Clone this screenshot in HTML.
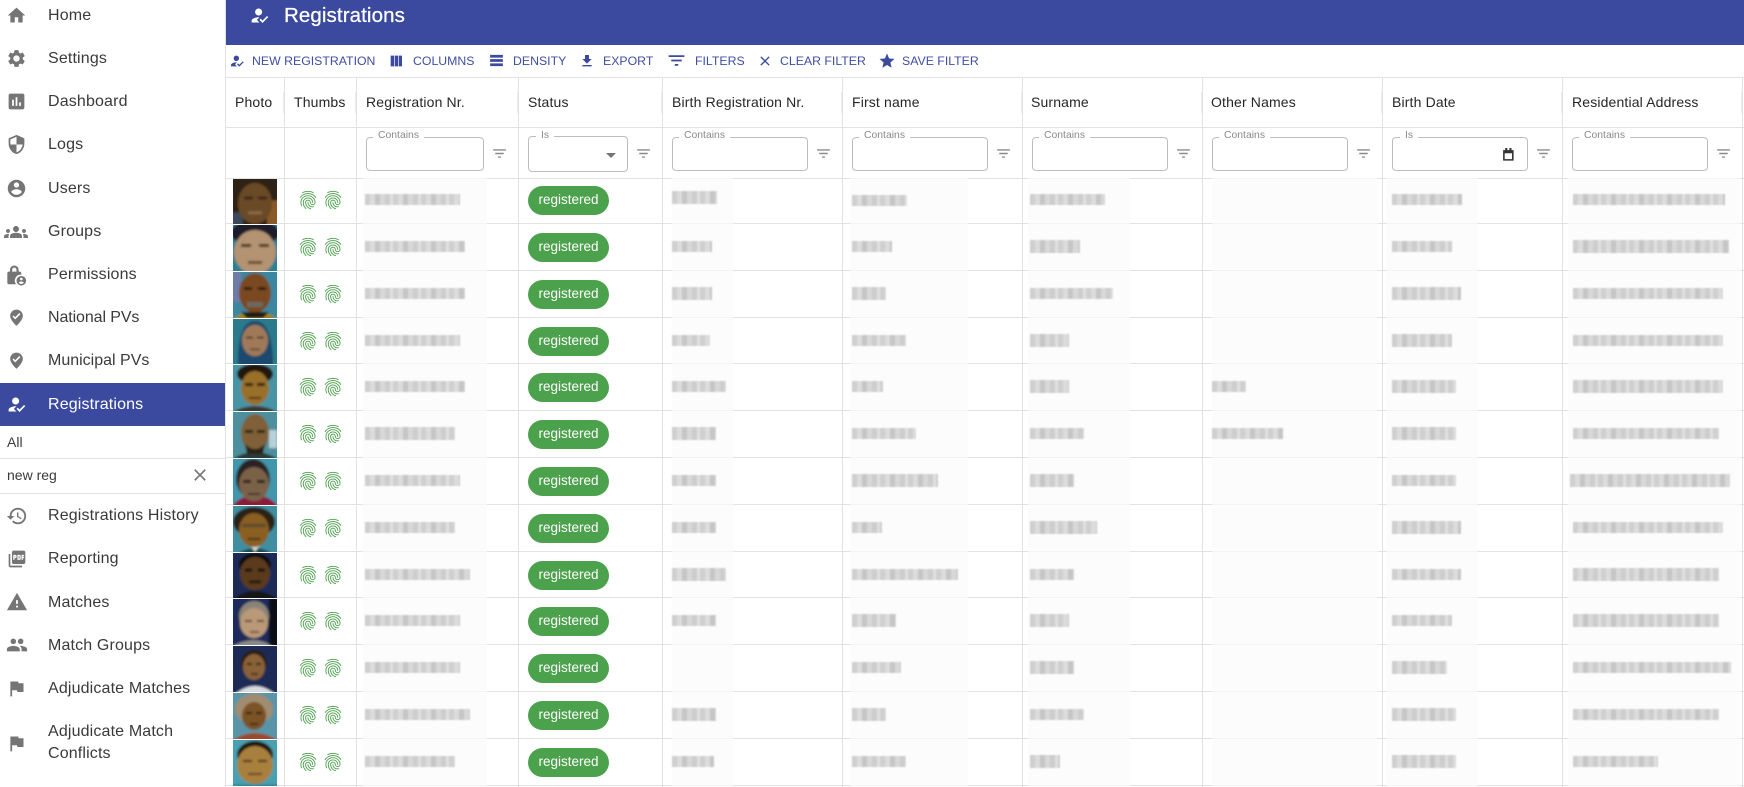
<!DOCTYPE html>
<html><head><meta charset="utf-8"><title>Registrations</title>
<style>
html,body{margin:0;padding:0;background:#fff}
body{width:1744px;height:787px;overflow:hidden;position:relative;font-family:"Liberation Sans",sans-serif}
div,svg,span{position:absolute}
.t{left:48px;font-size:16px;letter-spacing:.15px;color:#3a3a3a;line-height:20px;white-space:nowrap}
.ic{left:6px;width:21px;height:21px;fill:#757575}
.tb{top:53px;font-size:12.3px;line-height:16px;color:#3f4ea3;white-space:nowrap}
.ti{width:16px;height:16px;fill:#3b4a9f}
.h{left:226px;width:1518px;height:1px;background:#e2e2e2}
.v{top:78px;bottom:0;width:1px;background:#e2e2e2}
.sep{top:92px;height:21px;width:1px;background:#ececec}
.th{top:93px;font-size:14px;letter-spacing:.15px;line-height:18px;color:#262626;white-space:nowrap}
.i{top:137px;width:134px;height:32px;border:1px solid #bdbdbd;border-radius:4px;background:#fff}
.l{top:129px;height:13px;background:#fff;font-size:10.4px;line-height:13px;color:#8a8a8a;padding:0 5px;white-space:nowrap}
.fi{top:145px;width:17px;height:17px;fill:#8a8a8a}
.halo{top:178px;bottom:0;background:rgba(251,251,251,.72)}
.r{left:0;width:1744px;height:47px}
.ph{left:233px;top:2px;width:44px;height:46px}
.f{top:13px;width:22px;height:22px;fill:#4b9f4b}
.c{left:528px;top:10px;width:81px;height:29px;border-radius:15px;background:#4ca24c;color:#fff;font-size:13.5px;line-height:27px;text-align:center}
.b{top:18px;height:11px;background-image:repeating-linear-gradient(90deg,#cfcfcf 0 5px,#dcdcdc 5px 10px,#c6c6c6 10px 15px,#d8d8d8 15px 20px,#cdcdcd 20px 25px,#e0e0e0 25px 28px);filter:blur(.9px)}
.e{top:17px;height:13px}
</style></head><body>
<svg width="0" height="0" style="position:absolute"><defs>
<filter id="bl"><feGaussianBlur stdDeviation="1"/></filter>
<symbol id="home" viewBox="0 0 24 24"><path d="M10 20v-6h4v6h5v-8h3L12 3 2 12h3v8z"/></symbol>
<symbol id="set" viewBox="0 0 24 24"><path d="M19.14 12.94c.04-.3.06-.61.06-.94 0-.32-.02-.64-.07-.94l2.03-1.58c.18-.14.23-.41.12-.61l-1.92-3.32c-.12-.22-.37-.29-.59-.22l-2.39.96c-.5-.38-1.03-.7-1.62-.94l-.36-2.54c-.04-.24-.24-.41-.48-.41h-3.84c-.24 0-.43.17-.47.41l-.36 2.54c-.59.24-1.13.57-1.62.94l-2.39-.96c-.22-.08-.47 0-.59.22L2.74 8.87c-.12.21-.08.47.12.61l2.03 1.58c-.05.3-.09.63-.09.94s.02.64.07.94l-2.03 1.58c-.18.14-.23.41-.12.61l1.92 3.32c.12.22.37.29.59.22l2.39-.96c.5.38 1.03.7 1.62.94l.36 2.54c.05.24.24.41.48.41h3.84c.24 0 .44-.17.47-.41l.36-2.54c.59-.24 1.13-.56 1.62-.94l2.39.96c.22.08.47 0 .59-.22l1.92-3.32c.12-.22.07-.47-.12-.61l-2.01-1.58zM12 15.6c-1.98 0-3.6-1.62-3.6-3.6s1.62-3.6 3.6-3.6 3.6 1.62 3.6 3.6-1.62 3.6-3.6 3.6z"/></symbol>
<symbol id="dash" viewBox="0 0 24 24"><path d="M19 3H5c-1.1 0-2 .9-2 2v14c0 1.1.9 2 2 2h14c1.1 0 2-.9 2-2V5c0-1.1-.9-2-2-2zM9 17H7v-7h2v7zm4 0h-2V7h2v10zm4 0h-2v-4h2v4z"/></symbol>
<symbol id="sec" viewBox="0 0 24 24"><path d="M12 1L3 5v6c0 5.55 3.84 10.74 9 12 5.16-1.26 9-6.45 9-12V5l-9-4zm0 10.99h7c-.53 4.12-3.28 7.79-7 8.94V12H5V6.3l7-3.11v8.8z"/></symbol>
<symbol id="usr" viewBox="0 0 24 24"><path d="M12 2C6.48 2 2 6.48 2 12s4.48 10 10 10 10-4.48 10-10S17.52 2 12 2zm0 3c1.66 0 3 1.34 3 3s-1.34 3-3 3-3-1.34-3-3 1.34-3 3-3zm0 14.2c-2.5 0-4.71-1.28-6-3.22.03-1.99 4-3.08 6-3.08 1.99 0 5.97 1.09 6 3.08-1.29 1.94-3.5 3.22-6 3.22z"/></symbol>
<symbol id="grp" viewBox="0 0 24 24"><path d="M12 12.75c1.63 0 3.07.39 4.24.9 1.08.48 1.76 1.56 1.76 2.73V18H6v-1.61c0-1.18.68-2.26 1.76-2.73 1.17-.52 2.61-.91 4.24-.91zM4 13c1.1 0 2-.9 2-2s-.9-2-2-2-2 .9-2 2 .9 2 2 2zm1.13 1.1c-.37-.06-.74-.1-1.13-.1-.99 0-1.93.21-2.78.58C.48 14.9 0 15.62 0 16.43V18h4.5v-1.61c0-.83.23-1.61.63-2.29zM20 13c1.1 0 2-.9 2-2s-.9-2-2-2-2 .9-2 2 .9 2 2 2zm4 3.43c0-.81-.48-1.53-1.22-1.85-.85-.37-1.79-.58-2.78-.58-.39 0-.76.04-1.13.1.4.68.63 1.46.63 2.29V18H24v-1.57zM12 6c1.66 0 3 1.34 3 3s-1.34 3-3 3-3-1.34-3-3 1.34-3 3-3z"/></symbol>
<symbol id="perm" viewBox="0 0 24 24"><path d="M15.500 7.500h-1V5.500a5 5 0 0 0-10 0v2h-1a2 2 0 0 0-2 2V20a2 2 0 0 0 2 2h8A6.800 6.800 0 0 1 17.500 11.100V9.500a2 2 0 0 0-2-2zM7 5.500a2.500 2.500 0 0 1 5 0v2H7z"/><path fill-rule="evenodd" d="M17.500 12.500a5.500 5.500 0 1 0 0 11 5.500 5.500 0 0 0 0-11zm0 2a1.500 1.500 0 1 1 0 3 1.500 1.500 0 0 1 0-3zm0 7.200c-1.200 0-2.300-.6-2.900-1.500.3-.8 1.900-1.300 2.900-1.300s2.600.5 2.900 1.300c-.6.9-1.700 1.500-2.900 1.500z"/></symbol>
<symbol id="pv" viewBox="0 0 24 24"><path d="M12 2C7.600 2 4 5.400 4 9.800c0 5.700 8 12.700 8 12.700s8-7 8-12.700C20 5.400 16.400 2 12 2zm-1.600 12.300L7 10.900l1.400-1.400 2 2 5.200-5.200L17 7.700z"/></symbol>
<symbol id="reg" viewBox="0 0 24 24"><path d="M9 17l3-2.940c-.39-.04-.68-.06-1-.06-2.670 0-8 1.340-8 4v2h9l-3-3zm2-5c2.210 0 4-1.790 4-4s-1.790-4-4-4-4 1.790-4 4 1.790 4 4 4z"/><path d="M15.470 20.500L12 17l1.400-1.410 2.070 2.080 5.130-5.170 1.400 1.410z"/></symbol>
<symbol id="hist" viewBox="0 0 24 24"><path d="M13 3c-4.970 0-9 4.030-9 9H1l3.890 3.890.07.14L9 12H6c0-3.870 3.130-7 7-7s7 3.130 7 7-3.130 7-7 7c-1.930 0-3.680-.79-4.940-2.060l-1.420 1.420C8.270 19.990 10.510 21 13 21c4.970 0 9-4.030 9-9s-4.030-9-9-9zm-1 5v5l4.280 2.540.72-1.210-3.500-2.080V8H12z"/></symbol>
<symbol id="pdf" viewBox="0 0 24 24"><path d="M20 2H8c-1.100 0-2 .9-2 2v12c0 1.100.9 2 2 2h12c1.100 0 2-.9 2-2V4c0-1.100-.9-2-2-2zm-8.500 7.500c0 .83-.67 1.500-1.500 1.500H9v2H7.500V7H10c.83 0 1.500.67 1.500 1.500v1zm5 2c0 .83-.67 1.500-1.500 1.500h-2.500V7H15c.83 0 1.500.67 1.500 1.500v3zm4-3H19v1h1.500V11H19v2h-1.500V7h3v1.500zM9 9.500h1v-1H9v1zM4 6H2v14c0 1.100.9 2 2 2h14v-2H4V6zm10 5.500h1v-3h-1v3z"/></symbol>
<symbol id="warn" viewBox="0 0 24 24"><path d="M1 21h22L12 2 1 21zm12-3h-2v-2h2v2zm0-4h-2v-4h2v4z"/></symbol>
<symbol id="ppl" viewBox="0 0 24 24"><path d="M16 11c1.660 0 2.990-1.340 2.990-3S17.660 5 16 5c-1.660 0-3 1.340-3 3s1.340 3 3 3zm-8 0c1.660 0 2.990-1.340 2.990-3S9.660 5 8 5C6.340 5 5 6.340 5 8s1.340 3 3 3zm0 2c-2.330 0-7 1.170-7 3.500V19h14v-2.500c0-2.330-4.670-3.500-7-3.500zm8 0c-.29 0-.62.02-.97.05 1.160.84 1.970 1.970 1.970 3.450V19h6v-2.500c0-2.330-4.670-3.500-7-3.500z"/></symbol>
<symbol id="flag" viewBox="0 0 24 24"><path d="M14.400 6L14 4H5v17h2v-7h5.600l.4 2h7V6z"/></symbol>
<symbol id="x" viewBox="0 0 24 24"><path d="M19 6.410L17.590 5 12 10.590 6.410 5 5 6.410 10.590 12 5 17.590 6.410 19 12 13.410 17.590 19 19 17.590 13.410 12z"/></symbol>
<symbol id="col" viewBox="0 0 24 24"><path d="M10 20h5V4h-5v16zm-6 0h5V4H4v16zM16 4v16h5V4h-5z"/></symbol>
<symbol id="den" viewBox="0 0 24 24"><path d="M3 4h18v4H3zM3 10h18v4H3zM3 16h18v4H3z"/></symbol>
<symbol id="dl" viewBox="0 0 24 24"><path d="M19 9h-4V3H9v6H5l7 7 7-7zM5 18v2h14v-2H5z"/></symbol>
<symbol id="fl" viewBox="0 0 24 24"><path d="M10 18h4v-2h-4v2zM3 6v2h18V6H3zm3 7h12v-2H6v2z"/></symbol>
<symbol id="star" viewBox="0 0 24 24"><path d="M12 17.270L18.180 21l-1.640-7.030L22 9.240l-7.190-.61L12 2 9.190 8.630 2 9.240l5.460 4.730L5.820 21z"/></symbol>
<symbol id="fp" viewBox="0 0 24 24"><path d="M17.810 4.470c-.08 0-.16-.02-.23-.06C15.660 3.420 14 3 12.010 3c-1.980 0-3.860.47-5.570 1.410-.24.13-.54.04-.68-.2-.13-.24-.04-.55.2-.68C7.820 2.520 9.860 2 12.010 2c2.130 0 3.990.47 6.030 1.520.25.13.34.43.21.67-.09.18-.26.28-.44.28zM3.500 9.720c-.1 0-.2-.03-.29-.09-.23-.16-.28-.47-.12-.7.99-1.400 2.250-2.500 3.750-3.270C9.980 4.040 14 4.030 17.150 5.650c1.500.77 2.760 1.860 3.750 3.250.16.22.11.54-.12.7-.23.16-.54.11-.7-.12-.9-1.260-2.040-2.250-3.390-2.940-2.870-1.470-6.540-1.470-9.400.01-1.360.7-2.500 1.700-3.400 2.960-.08.14-.23.21-.39.21zm6.250 12.070c-.13 0-.26-.05-.35-.15-.87-.87-1.340-1.430-2.010-2.640-.69-1.230-1.050-2.730-1.050-4.340 0-2.970 2.540-5.390 5.660-5.390s5.660 2.420 5.660 5.390c0 .28-.22.5-.5.5s-.5-.22-.5-.5c0-2.420-2.090-4.390-4.660-4.390-2.570 0-4.660 1.970-4.660 4.390 0 1.440.32 2.770.93 3.850.64 1.150 1.080 1.640 1.850 2.420.19.2.19.51 0 .71-.11.1-.24.15-.37.15zm7.170-1.850c-1.190 0-2.240-.3-3.100-.89-1.490-1.010-2.380-2.650-2.380-4.390 0-.28.22-.5.5-.5s.5.22.5.5c0 1.410.72 2.740 1.940 3.560.71.48 1.540.71 2.540.71.24 0 .64-.03 1.040-.1.27-.05.53.13.58.41.05.27-.13.53-.41.58-.57.11-1.070.12-1.210.12zM14.910 22c-.04 0-.09-.01-.13-.02-1.590-.44-2.630-1.030-3.720-2.100-1.400-1.390-2.170-3.240-2.170-5.220 0-1.620 1.380-2.940 3.080-2.940 1.700 0 3.080 1.320 3.080 2.940 0 1.070.93 1.940 2.080 1.940s2.080-.87 2.080-1.940c0-3.770-3.250-6.830-7.250-6.830-2.840 0-5.440 1.580-6.610 4.030-.39.81-.59 1.760-.59 2.800 0 .78.07 2.010.67 3.610.1.26-.03.55-.29.64-.26.1-.55-.04-.64-.29-.49-1.310-.73-2.610-.73-3.960 0-1.200.23-2.290.68-3.240 1.330-2.790 4.280-4.600 7.510-4.600 4.550 0 8.250 3.510 8.250 7.830 0 1.620-1.380 2.940-3.080 2.940s-3.080-1.320-3.080-2.940c0-1.070-.93-1.940-2.080-1.940s-2.080.87-2.080 1.940c0 1.710.66 3.310 1.870 4.510.95.94 1.860 1.460 3.270 1.850.27.07.42.35.35.61-.05.23-.26.38-.47.38z"/></symbol>
</defs></svg>

<!-- sidebar -->
<div style="left:225px;top:0;width:1px;height:787px;background:#e2e2e2"></div>
<div style="left:0;top:383px;width:225px;height:43px;background:#3b4a9f"></div>
<svg class="ic" style="top:5px"><use href="#home"/></svg><div class="t" style="top:6px">Home</div>
<svg class="ic" style="top:48px"><use href="#set"/></svg><div class="t" style="top:49px">Settings</div>
<svg class="ic" style="top:91px"><use href="#dash"/></svg><div class="t" style="top:92px">Dashboard</div>
<svg class="ic" style="top:134px"><use href="#sec"/></svg><div class="t" style="top:135px">Logs</div>
<svg class="ic" style="top:178px"><use href="#usr"/></svg><div class="t" style="top:179px">Users</div>
<svg class="ic" style="left:4px;top:220px;width:24px;height:24px"><use href="#grp"/></svg><div class="t" style="top:222px">Groups</div>
<svg class="ic" style="top:265px"><use href="#perm"/></svg><div class="t" style="top:265px">Permissions</div>
<svg class="ic" style="left:7px;top:308px;width:19px;height:19px"><use href="#pv"/></svg><div class="t" style="top:308px;letter-spacing:-.1px">National PVs</div>
<svg class="ic" style="left:7px;top:351px;width:19px;height:19px"><use href="#pv"/></svg><div class="t" style="top:351px;letter-spacing:0">Municipal PVs</div>
<svg class="ic" style="top:394px;fill:#fff"><use href="#reg"/></svg><div class="t" style="top:395px;color:#fff">Registrations</div>
<div class="t" style="left:7px;top:432px;font-size:14px;letter-spacing:0">All</div>
<div style="left:0;top:458px;width:225px;height:1px;background:#e2e2e2"></div>
<div class="t" style="left:7px;top:465px;font-size:14px;letter-spacing:0">new reg</div>
<svg style="left:190px;top:465px;width:20px;height:20px;fill:#757575"><use href="#x"/></svg>
<div style="left:0;top:493px;width:225px;height:1px;background:#e2e2e2"></div>
<svg class="ic" style="top:505px;width:22px;height:22px"><use href="#hist"/></svg><div class="t" style="top:506px">Registrations History</div>
<svg class="ic" style="left:7px;top:549px;width:20px;height:20px"><use href="#pdf"/></svg><div class="t" style="top:549px">Reporting</div>
<svg class="ic" style="top:591px;width:22px;height:22px"><use href="#warn"/></svg><div class="t" style="top:593px">Matches</div>
<svg class="ic" style="top:634px;width:22px;height:22px"><use href="#ppl"/></svg><div class="t" style="top:636px">Match Groups</div>
<svg class="ic" style="top:678px"><use href="#flag"/></svg><div class="t" style="top:679px">Adjudicate Matches</div>
<svg class="ic" style="top:733px"><use href="#flag"/></svg><div class="t" style="top:722px">Adjudicate Match</div><div class="t" style="top:744px">Conflicts</div>

<!-- header -->
<div style="left:226px;top:0;width:1518px;height:45px;background:#3b4a9f"></div>
<svg style="left:249px;top:5px;width:21px;height:21px;fill:#fff"><use href="#reg"/></svg>
<div style="left:284px;top:4px;font-size:20.5px;letter-spacing:.1px;line-height:24px;color:#fff;white-space:nowrap;-webkit-text-stroke:.25px #fff">Registrations</div>

<!-- toolbar -->
<svg class="ti" style="left:229px;top:53px"><use href="#reg"/></svg><div class="tb" style="left:252px">NEW REGISTRATION</div>
<svg class="ti" style="left:388px;top:53px"><use href="#col"/></svg><div class="tb" style="left:413px">COLUMNS</div>
<svg class="ti" style="left:488px;top:52px;width:17px;height:17px"><use href="#den"/></svg><div class="tb" style="left:513px">DENSITY</div>
<svg class="ti" style="left:579px;top:53px"><use href="#dl"/></svg><div class="tb" style="left:603px">EXPORT</div>
<svg class="ti" style="left:666px;top:50px;width:21px;height:21px"><use href="#fl"/></svg><div class="tb" style="left:695px">FILTERS</div>
<svg class="ti" style="left:757px;top:53px"><use href="#x"/></svg><div class="tb" style="left:780px">CLEAR FILTER</div>
<svg class="ti" style="left:878px;top:52px;width:18px;height:18px"><use href="#star"/></svg><div class="tb" style="left:902px">SAVE FILTER</div>

<!-- halos + grid -->
<div class="h" style="top:77px"></div><div class="h" style="top:127px"></div><div class="h" style="top:178px"></div>
<div class="h" style="top:223px"></div><div class="h" style="top:270px"></div><div class="h" style="top:317px"></div><div class="h" style="top:363px"></div><div class="h" style="top:410px"></div><div class="h" style="top:457px"></div><div class="h" style="top:504px"></div><div class="h" style="top:551px"></div><div class="h" style="top:597px"></div><div class="h" style="top:644px"></div><div class="h" style="top:691px"></div><div class="h" style="top:738px"></div><div class="h" style="top:785px"></div>
<div class="halo" style="left:363px;width:124px"></div><div class="halo" style="left:672px;width:61px"></div><div class="halo" style="left:850px;width:118px"></div><div class="halo" style="left:1028px;width:102px"></div><div class="halo" style="left:1212px;width:166px"></div><div class="halo" style="left:1386px;width:92px"></div><div class="halo" style="left:1568px;width:172px"></div>
<div class="v" style="left:284px"></div><div class="v" style="left:356px"></div><div class="v" style="left:518px"></div><div class="v" style="left:662px"></div><div class="v" style="left:842px"></div><div class="v" style="left:1022px"></div><div class="v" style="left:1202px"></div><div class="v" style="left:1382px"></div><div class="v" style="left:1562px"></div><div class="v" style="left:1742px"></div>
<div class="sep" style="left:283px"></div><div class="sep" style="left:355px"></div><div class="sep" style="left:517px"></div><div class="sep" style="left:661px"></div><div class="sep" style="left:841px"></div><div class="sep" style="left:1021px"></div><div class="sep" style="left:1201px"></div><div class="sep" style="left:1381px"></div><div class="sep" style="left:1561px"></div><div class="sep" style="left:1741px"></div>

<!-- table header -->
<div class="th" style="left:235px">Photo</div><div class="th" style="left:294px">Thumbs</div><div class="th" style="left:366px">Registration Nr.</div><div class="th" style="left:528px">Status</div><div class="th" style="left:672px">Birth Registration Nr.</div><div class="th" style="left:852px">First name</div><div class="th" style="left:1031px">Surname</div><div class="th" style="left:1211px">Other Names</div><div class="th" style="left:1392px">Birth Date</div><div class="th" style="left:1572px">Residential Address</div>

<!-- filters -->
<div class="i" style="left:366px;width:116px"></div><div class="l" style="left:373px">Contains</div><svg class="fi" style="left:491px"><use href="#fl"/></svg>
<div class="i" style="left:528px;width:98px;height:34px;top:136px"></div><div class="l" style="left:536px">Is</div><svg style="left:599px;top:143px;width:20px;height:20px;fill:#757575"><path d="M7 10l5 5 5-5z"/></svg><svg class="fi" style="left:635px"><use href="#fl"/></svg>
<div class="i" style="left:672px"></div><div class="l" style="left:679px">Contains</div><svg class="fi" style="left:815px"><use href="#fl"/></svg>
<div class="i" style="left:852px"></div><div class="l" style="left:859px">Contains</div><svg class="fi" style="left:995px"><use href="#fl"/></svg>
<div class="i" style="left:1032px"></div><div class="l" style="left:1039px">Contains</div><svg class="fi" style="left:1175px"><use href="#fl"/></svg>
<div class="i" style="left:1212px"></div><div class="l" style="left:1219px">Contains</div><svg class="fi" style="left:1355px"><use href="#fl"/></svg>
<div class="i" style="left:1392px"></div><div class="l" style="left:1400px">Is</div><svg style="left:1501px;top:147px;width:14px;height:14px;fill:#333"><path d="M2 3h2V1h2v2h2V1h2v2h2v10H2zM3.500 6v5.500h7V6z" transform="scale(1.050)"/></svg><svg class="fi" style="left:1535px"><use href="#fl"/></svg>
<div class="i" style="left:1572px"></div><div class="l" style="left:1579px">Contains</div><svg class="fi" style="left:1715px"><use href="#fl"/></svg>

<!-- row 1 -->
<div class="r" style="top:176px">
<svg class="ph" style="top:3px;height:45px" viewBox="0 0 44 46" preserveAspectRatio="none"><g filter="url(#bl)"><rect x="-2" y="-2" width="48" height="50" fill="#2e2418"/><rect x="34" y="22" width="12" height="26" fill="#8a5a28"/><rect x="-2" y="34" width="12" height="14" fill="#3a4a58"/><ellipse cx="22" cy="25" rx="17" ry="21" fill="#6b4a28"/><rect x="11" y="18" width="9" height="3" fill="#3a2814"/><rect x="25" y="18" width="9" height="3" fill="#3a2814"/><rect x="15" y="33" width="14" height="3" fill="#8a6a48"/></g></svg>
<svg class="f" style="left:297px"><use href="#fp"/></svg><svg class="f" style="left:322px"><use href="#fp"/></svg>
<div class="c">registered</div>
<div class="b" style="left:365px;width:95px"></div><div class="b e" style="left:672px;width:45px;top:15px"></div><div class="b" style="left:852px;width:55px;top:19px"></div><div class="b" style="left:1030px;width:75px"></div><div class="b" style="left:1392px;width:70px"></div><div class="b" style="left:1573px;width:152px"></div></div>
<!-- row 2 -->
<div class="r" style="top:223px">
<svg class="ph" viewBox="0 0 44 46" preserveAspectRatio="none"><g filter="url(#bl)"><rect x="-2" y="-2" width="48" height="50" fill="#2a7f94"/><ellipse cx="22" cy="8" rx="24" ry="13" fill="#1d1f2a"/><ellipse cx="22" cy="27" rx="21" ry="22" fill="#b39372"/><rect x="8" y="19" width="10" height="3" fill="#4a3420"/><rect x="26" y="19" width="10" height="3" fill="#4a3420"/><rect x="15" y="36" width="14" height="3" fill="#6a4a30"/></g></svg>
<svg class="f" style="left:297px"><use href="#fp"/></svg><svg class="f" style="left:322px"><use href="#fp"/></svg>
<div class="c">registered</div>
<div class="b" style="left:365px;width:100px"></div><div class="b" style="left:672px;width:40px"></div><div class="b" style="left:852px;width:40px"></div><div class="b e" style="left:1030px;width:50px"></div><div class="b" style="left:1392px;width:60px"></div><div class="b e" style="left:1573px;width:156px"></div></div>
<!-- row 3 -->
<div class="r" style="top:270px">
<svg class="ph" viewBox="0 0 44 46" preserveAspectRatio="none"><g filter="url(#bl)"><rect x="-2" y="-2" width="48" height="50" fill="#3a87a0"/><rect x="-2" y="-2" width="10" height="32" fill="#6f7ca8"/><path d="M-2 48 Q22 30 46 48z" fill="#a08020"/><ellipse cx="22" cy="21" rx="16" ry="20" fill="#7a4a22"/><rect x="11" y="15" width="8" height="3" fill="#2a1a10"/><rect x="25" y="15" width="8" height="3" fill="#2a1a10"/><rect x="14" y="30" width="16" height="5" fill="#6a6a60"/><path d="M8 40 L36 40 L30 46 L14 46z" fill="#1a1a18"/></g></svg>
<svg class="f" style="left:297px"><use href="#fp"/></svg><svg class="f" style="left:322px"><use href="#fp"/></svg>
<div class="c">registered</div>
<div class="b" style="left:365px;width:100px"></div><div class="b e" style="left:672px;width:40px"></div><div class="b e" style="left:852px;width:34px"></div><div class="b" style="left:1030px;width:83px"></div><div class="b e" style="left:1392px;width:69px"></div><div class="b" style="left:1573px;width:150px"></div></div>
<!-- row 4 -->
<div class="r" style="top:317px">
<svg class="ph" style="height:45px" viewBox="0 0 44 46" preserveAspectRatio="none"><g filter="url(#bl)"><rect x="-2" y="-2" width="48" height="50" fill="#2a7a8c"/><path d="M5 48 Q4 2 22 2 Q40 2 40 48z" fill="#1d4a6e"/><ellipse cx="22" cy="22" rx="13" ry="16" fill="#a07a58"/><rect x="13" y="18" width="7" height="2" fill="#4a3828"/><rect x="24" y="18" width="7" height="2" fill="#4a3828"/><rect x="17" y="30" width="10" height="2" fill="#6a4a38"/></g></svg>
<svg class="f" style="left:297px"><use href="#fp"/></svg><svg class="f" style="left:322px"><use href="#fp"/></svg>
<div class="c">registered</div>
<div class="b" style="left:365px;width:95px"></div><div class="b" style="left:672px;width:38px"></div><div class="b" style="left:852px;width:54px"></div><div class="b e" style="left:1030px;width:39px"></div><div class="b e" style="left:1392px;width:60px"></div><div class="b" style="left:1573px;width:150px"></div></div>
<!-- row 5 -->
<div class="r" style="top:363px">
<svg class="ph" viewBox="0 0 44 46" preserveAspectRatio="none"><g filter="url(#bl)"><rect x="-2" y="-2" width="48" height="50" fill="#4a94a4"/><ellipse cx="22" cy="9" rx="18" ry="10" fill="#201810"/><path d="M-2 48 Q22 34 46 48z" fill="#3a3430"/><ellipse cx="22" cy="23" rx="14" ry="17" fill="#98702a"/><rect x="12" y="18" width="8" height="3" fill="#2a1a10"/><rect x="24" y="18" width="8" height="3" fill="#2a1a10"/><rect x="16" y="32" width="12" height="2" fill="#5a2a18"/></g></svg>
<svg class="f" style="left:297px"><use href="#fp"/></svg><svg class="f" style="left:322px"><use href="#fp"/></svg>
<div class="c">registered</div>
<div class="b" style="left:365px;width:100px"></div><div class="b" style="left:672px;width:54px"></div><div class="b" style="left:852px;width:31px"></div><div class="b e" style="left:1030px;width:39px"></div><div class="b" style="left:1212px;width:34px"></div><div class="b e" style="left:1392px;width:64px"></div><div class="b e" style="left:1573px;width:150px"></div></div>
<!-- row 6 -->
<div class="r" style="top:410px">
<svg class="ph" viewBox="0 0 44 46" preserveAspectRatio="none"><g filter="url(#bl)"><rect x="-2" y="-2" width="48" height="50" fill="#4d8f9c"/><rect x="36" y="18" width="8" height="18" fill="#b8d0d8"/><path d="M-2 48 Q22 32 46 48z" fill="#2c3a3c"/><ellipse cx="22" cy="21" rx="14" ry="19" fill="#7f6038"/><rect x="12" y="18" width="8" height="3" fill="#2a2010"/><rect x="24" y="18" width="8" height="3" fill="#2a2010"/><path d="M12 32 Q22 42 32 32 L30 42 L14 42z" fill="#2a2018"/></g></svg>
<svg class="f" style="left:297px"><use href="#fp"/></svg><svg class="f" style="left:322px"><use href="#fp"/></svg>
<div class="c">registered</div>
<div class="b e" style="left:365px;width:90px"></div><div class="b e" style="left:672px;width:44px"></div><div class="b" style="left:852px;width:64px"></div><div class="b" style="left:1030px;width:54px"></div><div class="b" style="left:1212px;width:71px"></div><div class="b e" style="left:1392px;width:64px"></div><div class="b" style="left:1573px;width:146px"></div></div>
<!-- row 7 -->
<div class="r" style="top:457px">
<svg class="ph" viewBox="0 0 44 46" preserveAspectRatio="none"><g filter="url(#bl)"><rect x="-2" y="-2" width="48" height="50" fill="#3f96ac"/><ellipse cx="20" cy="20" rx="17" ry="20" fill="#2a2020"/><path d="M-2 48 Q10 34 22 38 Q34 34 46 48z" fill="#8a1f3a"/><ellipse cx="21" cy="25" rx="15" ry="17" fill="#7a6248"/><rect x="10" y="21" width="8" height="3" fill="#2a2018"/><rect x="24" y="21" width="8" height="3" fill="#2a2018"/><rect x="15" y="34" width="12" height="2" fill="#4a3028"/></g></svg>
<svg class="f" style="left:297px"><use href="#fp"/></svg><svg class="f" style="left:322px"><use href="#fp"/></svg>
<div class="c">registered</div>
<div class="b" style="left:365px;width:95px"></div><div class="b" style="left:672px;width:44px"></div><div class="b e" style="left:852px;width:86px"></div><div class="b e" style="left:1030px;width:44px"></div><div class="b" style="left:1392px;width:64px"></div><div class="b e" style="left:1570px;width:160px"></div></div>
<!-- row 8 -->
<div class="r" style="top:504px">
<svg class="ph" viewBox="0 0 44 46" preserveAspectRatio="none"><g filter="url(#bl)"><rect x="-2" y="-2" width="48" height="50" fill="#3f8fa0"/><ellipse cx="21" cy="16" rx="21" ry="15" fill="#2a2018"/><path d="M4 48 Q22 36 40 48z" fill="#1e4a50"/><path d="M16 38 L22 46 L28 38z" fill="#d8d8d0"/><ellipse cx="21" cy="24" rx="15" ry="17" fill="#8a5e22"/><rect x="9" y="18" width="24" height="3" fill="#5a4a30"/><rect x="15" y="32" width="12" height="2" fill="#4a2a18"/></g></svg>
<svg class="f" style="left:297px"><use href="#fp"/></svg><svg class="f" style="left:322px"><use href="#fp"/></svg>
<div class="c">registered</div>
<div class="b" style="left:365px;width:90px"></div><div class="b" style="left:672px;width:44px"></div><div class="b" style="left:852px;width:30px"></div><div class="b e" style="left:1030px;width:67px"></div><div class="b e" style="left:1392px;width:69px"></div><div class="b" style="left:1573px;width:150px"></div></div>
<!-- row 9 -->
<div class="r" style="top:551px;height:46px">
<svg class="ph" style="height:45px" viewBox="0 0 44 46" preserveAspectRatio="none"><g filter="url(#bl)"><rect x="-2" y="-2" width="48" height="50" fill="#1e2c58"/><ellipse cx="22" cy="12" rx="16" ry="12" fill="#0e0c10"/><path d="M-2 48 Q22 30 46 48z" fill="#141214"/><ellipse cx="22" cy="21" rx="15" ry="17" fill="#5a3a1e"/><rect x="12" y="16" width="7" height="3" fill="#140c08"/><rect x="25" y="16" width="7" height="3" fill="#140c08"/><rect x="16" y="28" width="12" height="3" fill="#2a1810"/></g></svg>
<svg class="f" style="left:297px"><use href="#fp"/></svg><svg class="f" style="left:322px"><use href="#fp"/></svg>
<div class="c">registered</div>
<div class="b" style="left:365px;width:105px"></div><div class="b e" style="left:672px;width:54px"></div><div class="b" style="left:852px;width:106px"></div><div class="b" style="left:1030px;width:44px"></div><div class="b" style="left:1392px;width:69px"></div><div class="b e" style="left:1573px;width:146px"></div></div>
<!-- row 10 -->
<div class="r" style="top:597px">
<svg class="ph" viewBox="0 0 44 46" preserveAspectRatio="none"><g filter="url(#bl)"><rect x="-2" y="-2" width="48" height="50" fill="#1c2a5c"/><rect x="36" y="-2" width="10" height="50" fill="#0e1018"/><path d="M-2 48 Q22 34 40 48z" fill="#8a8a88"/><ellipse cx="21" cy="17" rx="15" ry="15" fill="#8a8478"/><ellipse cx="21" cy="24" rx="14" ry="15" fill="#b99978"/><rect x="12" y="21" width="7" height="2" fill="#5a4030"/><rect x="24" y="21" width="7" height="2" fill="#5a4030"/><rect x="17" y="32" width="9" height="2" fill="#7a5040"/></g></svg>
<svg class="f" style="left:297px"><use href="#fp"/></svg><svg class="f" style="left:322px"><use href="#fp"/></svg>
<div class="c">registered</div>
<div class="b" style="left:365px;width:95px"></div><div class="b" style="left:672px;width:44px"></div><div class="b e" style="left:852px;width:44px"></div><div class="b e" style="left:1030px;width:39px"></div><div class="b" style="left:1392px;width:60px"></div><div class="b e" style="left:1573px;width:146px"></div></div>
<!-- row 11 -->
<div class="r" style="top:644px">
<svg class="ph" viewBox="0 0 44 46" preserveAspectRatio="none"><g filter="url(#bl)"><rect x="-2" y="-2" width="48" height="50" fill="#1f2c56"/><path d="M2 48 Q22 32 42 48z" fill="#d8dce0"/><ellipse cx="21" cy="17" rx="13" ry="13" fill="#2a1c18"/><ellipse cx="21" cy="21" rx="11" ry="13" fill="#8a6238"/><rect x="14" y="17" width="5" height="2" fill="#2a1810"/><rect x="23" y="17" width="5" height="2" fill="#2a1810"/><rect x="18" y="27" width="7" height="2" fill="#4a2a20"/></g></svg>
<svg class="f" style="left:297px"><use href="#fp"/></svg><svg class="f" style="left:322px"><use href="#fp"/></svg>
<div class="c">registered</div>
<div class="b" style="left:365px;width:95px"></div><div class="b" style="left:852px;width:49px"></div><div class="b e" style="left:1030px;width:44px"></div><div class="b e" style="left:1392px;width:55px"></div><div class="b" style="left:1573px;width:158px"></div></div>
<!-- row 12 -->
<div class="r" style="top:691px">
<svg class="ph" viewBox="0 0 44 46" preserveAspectRatio="none"><g filter="url(#bl)"><rect x="-2" y="-2" width="48" height="50" fill="#5a94a8"/><path d="M-2 48 Q22 32 46 48z" fill="#9a4a2a"/><ellipse cx="21" cy="16" rx="19" ry="15" fill="#a08c70"/><ellipse cx="21" cy="23" rx="12" ry="14" fill="#7a5228"/><rect x="13" y="19" width="6" height="2" fill="#2a1a10"/><rect x="23" y="19" width="6" height="2" fill="#2a1a10"/><rect x="17" y="30" width="8" height="2" fill="#4a2a18"/></g></svg>
<svg class="f" style="left:297px"><use href="#fp"/></svg><svg class="f" style="left:322px"><use href="#fp"/></svg>
<div class="c">registered</div>
<div class="b" style="left:365px;width:105px"></div><div class="b e" style="left:672px;width:44px"></div><div class="b e" style="left:852px;width:34px"></div><div class="b" style="left:1030px;width:54px"></div><div class="b e" style="left:1392px;width:64px"></div><div class="b" style="left:1573px;width:146px"></div></div>
<!-- row 13 -->
<div class="r" style="top:738px">
<svg class="ph" viewBox="0 0 44 46" preserveAspectRatio="none"><g filter="url(#bl)"><rect x="-2" y="-2" width="48" height="50" fill="#4aa0b0"/><ellipse cx="22" cy="15" rx="18" ry="14" fill="#201810"/><ellipse cx="22" cy="25" rx="18" ry="19" fill="#a8803c"/><rect x="10" y="20" width="9" height="2" fill="#3a2418"/><rect x="25" y="20" width="9" height="2" fill="#3a2418"/><rect x="15" y="33" width="14" height="2" fill="#6a3a28"/><rect x="-2" y="44" width="48" height="4" fill="#2e8a9c"/></g></svg>
<svg class="f" style="left:297px"><use href="#fp"/></svg><svg class="f" style="left:322px"><use href="#fp"/></svg>
<div class="c">registered</div>
<div class="b" style="left:365px;width:90px"></div><div class="b" style="left:672px;width:42px"></div><div class="b" style="left:852px;width:54px"></div><div class="b e" style="left:1030px;width:30px"></div><div class="b e" style="left:1392px;width:64px"></div><div class="b" style="left:1573px;width:85px"></div></div>
</body></html>
